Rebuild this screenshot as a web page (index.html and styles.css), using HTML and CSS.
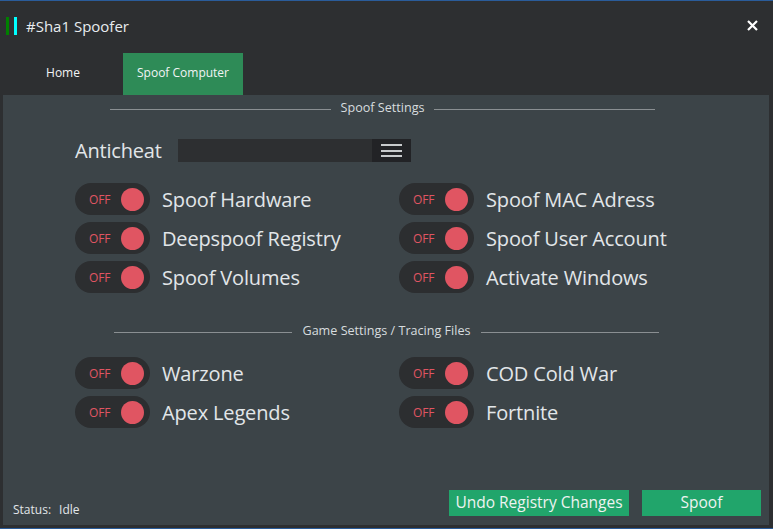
FILE: index.html
```html
<!DOCTYPE html>
<html>
<head>
<meta charset="utf-8">
<link rel="stylesheet" href="styles.css">
</head>
<body>
<div class="window">
  <div class="titlebar">
    <span class="bar bar-green"></span>
    <span class="bar bar-cyan"></span>
    <span class="title">#Sha1 Spoofer</span>
    <span class="close">
      <svg width="11" height="11" viewBox="0 0 11 11"><path d="M1 1L10 10M10 1L1 10" stroke="#fff" stroke-width="2.2"/></svg>
    </span>
  </div>
  <div class="tabs">
    <div class="tab">Home</div>
    <div class="tab active">Spoof Computer</div>
  </div>
  <div class="panel">
    <div class="section s1">
      <span class="line"></span><span class="section-title">Spoof Settings</span><span class="line"></span>
    </div>
    <div class="anticheat">
      <span class="ac-label">Anticheat</span>
      <div class="combo">
        <div class="combo-field"></div>
        <div class="combo-btn"><span></span><span></span><span></span></div>
      </div>
    </div>
    <div class="grid g1">
      <div class="item"><div class="toggle"><span class="off">OFF</span><span class="knob"></span></div><span class="label">Spoof Hardware</span></div>
      <div class="item"><div class="toggle"><span class="off">OFF</span><span class="knob"></span></div><span class="label">Spoof MAC Adress</span></div>
      <div class="item"><div class="toggle"><span class="off">OFF</span><span class="knob"></span></div><span class="label">Deepspoof Registry</span></div>
      <div class="item"><div class="toggle"><span class="off">OFF</span><span class="knob"></span></div><span class="label">Spoof User Account</span></div>
      <div class="item"><div class="toggle"><span class="off">OFF</span><span class="knob"></span></div><span class="label">Spoof Volumes</span></div>
      <div class="item"><div class="toggle"><span class="off">OFF</span><span class="knob"></span></div><span class="label">Activate Windows</span></div>
    </div>
    <div class="section s2">
      <span class="line"></span><span class="section-title">Game Settings / Tracing Files</span><span class="line"></span>
    </div>
    <div class="grid g2">
      <div class="item"><div class="toggle"><span class="off">OFF</span><span class="knob"></span></div><span class="label">Warzone</span></div>
      <div class="item"><div class="toggle"><span class="off">OFF</span><span class="knob"></span></div><span class="label">COD Cold War</span></div>
      <div class="item"><div class="toggle"><span class="off">OFF</span><span class="knob"></span></div><span class="label">Apex Legends</span></div>
      <div class="item"><div class="toggle"><span class="off">OFF</span><span class="knob"></span></div><span class="label">Fortnite</span></div>
    </div>
    <div class="footer">
      <span class="status">Status:<span class="status-val">Idle</span></span>
      <div class="buttons">
        <button class="btn btn-undo">Undo Registry Changes</button>
        <button class="btn btn-spoof">Spoof</button>
      </div>
    </div>
  </div>
</div>
</body>
</html>
```
FILE: styles.css
```css
* { box-sizing: border-box; }
html, body { margin: 0; padding: 0; }
body {
  width: 773px;
  height: 529px;
  overflow: hidden;
  font-family: "Open Sans", "Noto Sans", sans-serif;
  background: #2d2f31;
}
.window {
  width: 773px;
  height: 529px;
  display: flex;
  flex-direction: column;
  background: #2d2f31;
  border-top: 1px solid #2a5c9a;
  border-bottom: 1px solid #2a5c9a;
}
.titlebar {
  height: 52px;
  display: flex;
  align-items: center;
  padding-left: 6px;
  padding-bottom: 3px;
}
.bar {
  width: 3px;
  height: 18px;
  margin-right: 5px;
}
.bar-green { background: #008000; }
.bar-cyan { background: #00ffff; margin-right: 9px; }
.title {
  color: #e8ecef;
  font-size: 15px;
}
.close {
  margin-left: auto;
  margin-right: 15px;
  display: flex;
}
.tabs {
  height: 42px;
  display: flex;
  padding-left: 3px;
}
.tab {
  width: 120px;
  display: flex;
  align-items: center;
  justify-content: center;
  color: #f2f4f5;
  font-size: 12px;
  padding-bottom: 3px;
}
.tab.active { background: #2e8b57; }
.panel {
  flex: 1;
  margin: 0 4px 3px 3px;
  background: #3c4448;
  display: flex;
  flex-direction: column;
}
.section {
  display: flex;
  align-items: center;
  width: 545px;
  height: 24px;
}
.s1 { margin-left: 107px; }
.s2 { margin-left: 111px; margin-top: 25px; }
.line {
  flex: 1;
  height: 1px;
  background: #8a8f92;
  margin-top: 5px;
}
.section-title {
  color: #d7dcdf;
  font-size: 12.6px;
  padding: 0 10px;
}
.anticheat {
  display: flex;
  align-items: center;
  margin-top: 20px;
  margin-left: 72px;
  height: 23px;
}
.ac-label {
  color: #e2e6e9;
  font-size: 20px;
  width: 103px;
  letter-spacing: -0.2px;
  margin-top: -1px;
}
.combo {
  display: flex;
  width: 233px;
  height: 23px;
}
.combo-field { flex: 1; background: #2d2f31; }
.combo-btn {
  width: 39px;
  background: #222326;
  display: flex;
  flex-direction: column;
  justify-content: center;
  align-items: center;
  gap: 3.5px;
}
.combo-btn span {
  width: 21px;
  height: 2px;
  background: #c8cbcd;
}
.grid {
  display: grid;
  grid-template-columns: 324px 300px;
  row-gap: 7px;
  margin-left: 72px;
}
.g1 { margin-top: 21px; }
.g2 { margin-top: 15px; }
.item {
  display: flex;
  align-items: center;
  height: 32px;
}
.toggle {
  width: 75px;
  height: 32px;
  border-radius: 16px;
  background: #2c2e30;
  display: flex;
  align-items: center;
  padding-left: 14px;
  padding-right: 6px;
}
.off {
  color: #e05562;
  font-size: 12px;
  letter-spacing: -0.2px;
}
.knob {
  margin-left: auto;
  width: 23px;
  height: 23px;
  border-radius: 50%;
  background: #e05562;
}
.label {
  margin-left: 12px;
  color: #e2e6e9;
  font-size: 20px;
  letter-spacing: -0.15px;
}
.footer {
  margin-top: auto;
  display: flex;
  align-items: flex-end;
  padding: 0 8px 9px 10px;
}
.status {
  color: #e2e6e9;
  font-size: 12px;
  margin-bottom: -2px;
}
.status-val { margin-left: 8px; }
.buttons {
  margin-left: auto;
  display: flex;
  gap: 13px;
}
.btn {
  border: none;
  background: #21a56b;
  color: #eef3f1;
  font-family: "Open Sans", "Noto Sans", sans-serif;
  font-size: 15.5px;
  height: 26px;
  padding: 0 0 2px;
}
.btn-undo { width: 180px; }
.btn-spoof { width: 119px; }
```
